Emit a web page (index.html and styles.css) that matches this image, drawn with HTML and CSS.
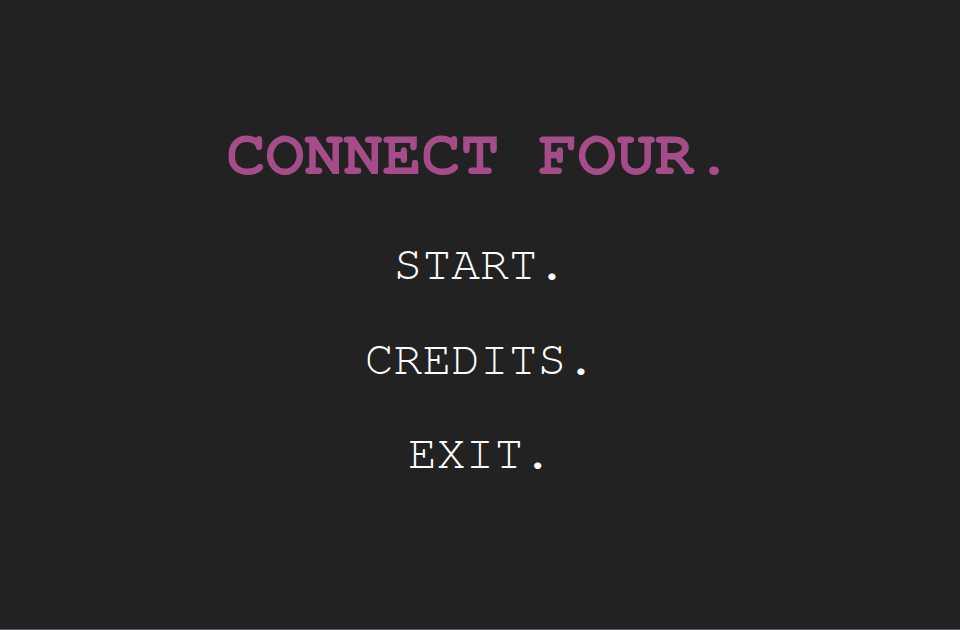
FILE: index.html
```html
<!DOCTYPE html>
<html>
<head>
<meta charset="utf-8">
<link rel="stylesheet" href="styles.css">
</head>
<body>
<main class="screen">
  <h1 class="title">CONNECT FOUR.</h1>
  <nav class="menu">
    <a class="menu-item">START.</a>
    <a class="menu-item">CREDITS.</a>
    <a class="menu-item">EXIT.</a>
  </nav>
</main>
<div class="bottom-line"></div>
</body>
</html>
```
FILE: styles.css
```css
html, body {
  margin: 0;
  padding: 0;
  background: #222222;
  height: 100%;
  overflow: hidden;
}
body {
  display: flex;
  flex-direction: column;
  font-family: FreeMono, "Liberation Mono", monospace;
}
.screen {
  flex: 1;
  display: flex;
  flex-direction: column;
  align-items: center;
  padding-top: 117px;
}
.title {
  margin: 0;
  font-size: 65px;
  line-height: 76px;
  font-weight: bold;
  color: #a64d89;
}
.menu {
  display: flex;
  flex-direction: column;
  align-items: center;
  gap: 39.5px;
  margin-top: 45px;
}
.menu-item {
  font-size: 48px;
  line-height: 55px;
  color: #ffffff;
  cursor: pointer;
}
.bottom-line {
  height: 1px;
  background: #56646a;
}
```
